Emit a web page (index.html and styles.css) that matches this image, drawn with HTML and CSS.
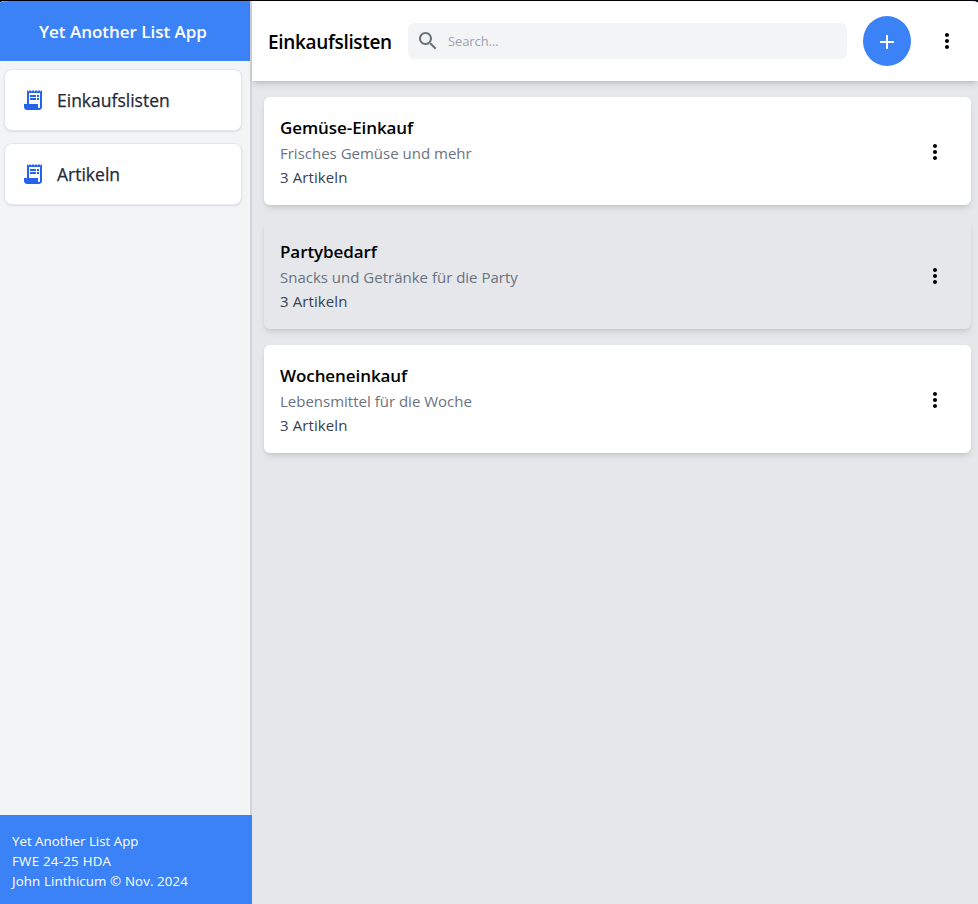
FILE: index.html
```html
<!DOCTYPE html>
<html lang="de">
<head>
<meta charset="utf-8">
<title>Yet Another List App</title>
<link rel="stylesheet" href="styles.css">
</head>
<body>
<svg class="defs" width="0" height="0">
  <symbol id="receipt" viewBox="0 0 24 24"><path fill-rule="evenodd" d="M19.500 3.500 18 2l-1.500 1.500L15 2l-1.500 1.500L12 2l-1.500 1.500L9 2 7.500 3.500 6 2v14H3v3c0 1.660 1.340 3 3 3h12c1.660 0 3-1.340 3-3V2zM19 19c0 .550-.450 1-1 1s-1-.450-1-1v-3H8V5h11z"/><path d="M9 7h6v2H9zM16 7h2v2h-2zM9 10h6v2H9zM16 10h2v2h-2z"/></symbol>
  <symbol id="more" viewBox="0 0 24 24"><path d="M12 8c1.100 0 2-.9 2-2s-.9-2-2-2-2 .9-2 2 .9 2 2 2m0 2c-1.100 0-2 .9-2 2s.9 2 2 2 2-.9 2-2-.9-2-2-2m0 6c-1.100 0-2 .9-2 2s.9 2 2 2 2-.9 2-2-.9-2-2-2"/></symbol>
  <symbol id="search" viewBox="0 0 24 24"><path d="M15.500 14h-.790l-.280-.270C15.410 12.590 16 11.110 16 9.500 16 5.910 13.090 3 9.500 3S3 5.910 3 9.500 5.910 16 9.500 16c1.610 0 3.090-.590 4.230-1.570l.270.280v.790l5 4.990L20.490 19zm-6 0C7.010 14 5 11.990 5 9.500S7.010 5 9.500 5 14 7.010 14 9.500 11.990 14 9.500 14"/></symbol>
  <symbol id="add" viewBox="0 0 24 24"><path d="M19 13h-6v6h-2v-6H5v-2h6V5h2v6h6z"/></symbol>
</svg>
<div class="app">
  <aside class="sidebar">
    <div class="brand"><span>Yet Another List App</span></div>
    <nav class="nav">
      <a class="nav-item"><svg class="icon"><use href="#receipt"/></svg><span>Einkaufslisten</span></a>
      <a class="nav-item"><svg class="icon"><use href="#receipt"/></svg><span>Artikeln</span></a>
    </nav>
    <footer class="footer"><p>Yet Another List App</p><p class="course">FWE 24-25 HDA</p><p class="author">John Linthicum © Nov. 2024</p></footer>
  </aside>
  <main class="main">
    <header class="toolbar">
      <h1>Einkaufslisten</h1>
      <label class="search"><svg class="icon"><use href="#search"/></svg><input type="text" placeholder="Search..."></label>
      <button class="add" aria-label="Hinzufügen"><svg class="icon"><use href="#add"/></svg></button>
      <button class="menu" aria-label="Menü"><svg class="icon"><use href="#more"/></svg></button>
    </header>
    <section class="lists">
      <article class="card">
        <div><h2>Gemüse-Einkauf</h2><p class="desc">Frisches Gemüse und mehr</p><p class="count">3 Artikeln</p></div>
        <button class="menu" aria-label="Menü"><svg class="icon"><use href="#more"/></svg></button>
      </article>
      <article class="card active">
        <div><h2>Partybedarf</h2><p class="desc">Snacks und Getränke für die Party</p><p class="count">3 Artikeln</p></div>
        <button class="menu" aria-label="Menü"><svg class="icon"><use href="#more"/></svg></button>
      </article>
      <article class="card">
        <div><h2>Wocheneinkauf</h2><p class="desc">Lebensmittel für die Woche</p><p class="count">3 Artikeln</p></div>
        <button class="menu" aria-label="Menü"><svg class="icon"><use href="#more"/></svg></button>
      </article>
    </section>
  </main>
</div>
</body>
</html>
```
FILE: styles.css
```css
* { box-sizing: border-box; margin: 0; padding: 0; }
body { background: #03020e; font-family: "Segoe UI", "Open Sans", sans-serif; height: 904px; padding-top: 1px; overflow: hidden; }
.defs { display: none; }
.app { display: flex; height: 903px; border-radius: 8px 8px 0 0 / 2px 2px 0 0; overflow: hidden; background: #e5e7eb; }
.icon { width: 24px; height: 24px; fill: currentColor; flex: none; }
button { border: 0; background: none; display: flex; align-items: center; justify-content: center; }
.sidebar { width: 252px; flex: none; display: flex; flex-direction: column; background: linear-gradient(#f3f4f6, #f3f4f6) 0 0 / 250px 100% no-repeat #d1d5db; }
.brand { width: 250px; height: 60px; background: #3b82f6; color: #fff; display: flex; align-items: center; justify-content: center; padding-right: 4px; font-size: 17px; font-weight: 600; letter-spacing: -.02px; white-space: nowrap; }
.nav { flex: 1; padding: 8px 10px 0 4px; display: flex; flex-direction: column; gap: 12px; }
.nav-item { height: 62px; border: 1px solid #e5e7eb; border-radius: 8px; background: #fff; box-shadow: 0 1px 2px rgba(0,0,0,.1); display: flex; align-items: center; gap: 12px; padding-left: 16px; color: #1f2937; font-size: 17.500px; font-weight: 500; -webkit-text-stroke: .25px currentColor; }
.nav-item .icon { color: #2563eb; }
.footer { height: 89px; background: #3b82f6; color: #fff; padding: 16px 12px; font-size: 13.300px; line-height: 20px; white-space: nowrap; }
.course { letter-spacing: .25px; }
.author { letter-spacing: .12px; }
.main { flex: 1; min-width: 0; display: flex; flex-direction: column; }
.toolbar { height: 80px; background: #fff; box-shadow: 0 4px 6px -1px rgba(0,0,0,.13), 0 2px 4px -2px rgba(0,0,0,.13); display: flex; align-items: center; padding: 0 19px 0 16px; }
h1 { width: 124px; margin-right: 16px; padding-top: 2px; font-size: 19px; letter-spacing: -.33px; font-weight: 550; white-space: nowrap; }
.search { flex: 1; height: 36px; border-radius: 6px; background: #f3f4f6; display: flex; align-items: center; padding-left: 8px; gap: 8px; color: #6b7280; }
.search input { border: 0; outline: 0; background: none; flex: 1; font: 13px "Segoe UI", "Open Sans", sans-serif; }
.search input::placeholder { color: #9ca3af; opacity: 1; letter-spacing: -.1px; }
.add { width: 48px; height: 50px; border-radius: 50%; background: #3b82f6; color: #fff; margin: 0 24px 0 16px; padding-top: 2px; }
.lists { padding: 16px 7px 0 12px; display: flex; flex-direction: column; gap: 16px; }
.card { height: 108px; border-radius: 6px; background: #fff; box-shadow: 0 4px 6px -1px rgba(0,0,0,.1), 0 2px 4px -2px rgba(0,0,0,.1); display: flex; align-items: center; justify-content: space-between; padding: 0 24px 0 16px; white-space: nowrap; }
.card.active { background: #e5e7eb; }
.card .menu { padding-top: 2px; }
h2 { height: 28px; padding-top: 1px; font-size: 17px; line-height: 28px; letter-spacing: -.08px; font-weight: 550; color: #000; }
.desc, .count { font-size: 15px; line-height: 24px; color: #6b7280; }
.count { color: #374151; letter-spacing: .1px; }
```
